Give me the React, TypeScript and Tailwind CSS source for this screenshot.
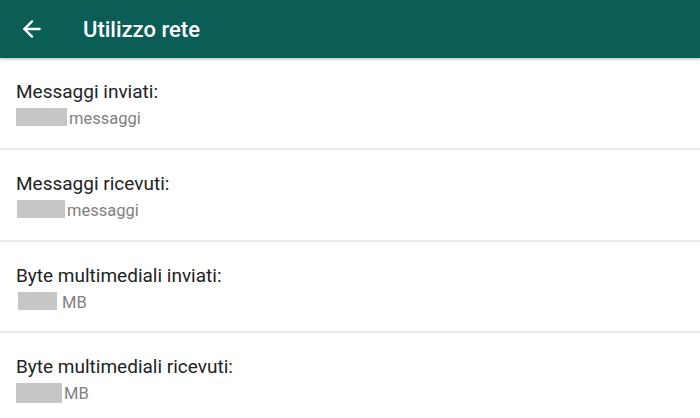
import { ArrowLeft } from "lucide-react";

const rows = [
  { title: "Messaggi inviati:", unit: "messaggi", box: "w-[51px]", gap: "" },
  { title: "Messaggi ricevuti:", unit: "messaggi", box: "w-[48px] ml-px", gap: "" },
  { title: "Byte multimediali inviati:", unit: "MB", box: "w-[39px] ml-[2px]", gap: "ml-[5px]" },
  { title: "Byte multimediali ricevuti:", unit: "MB", box: "w-[46px] h-[20px]", gap: "" },
];

export default function App() {
  return (
    <div className="h-[418px] w-[700px] overflow-hidden bg-white font-['Roboto',sans-serif]">
      <header className="relative z-10 flex h-[58px] items-center bg-[#0a5e55] shadow-[0_1px_3px_rgba(0,0,0,0.3)]">
        <div className="flex w-[83px] pl-[19px]">
          <ArrowLeft className="size-[26px] text-white" strokeWidth={2.2} />
        </div>
        <h1 className="text-[22px] font-medium text-white">Utilizzo rete</h1>
      </header>
      <main>
        {rows.map((row, i) => (
          <div
            key={row.title}
            className={`border-b-2 border-[#ebebeb] pl-4 pt-[22px] ${i === 2 ? "h-[91px]" : "h-[92px]"}`}
          >
            <div className="text-[19px] leading-6 text-[#222222]">{row.title}</div>
            <div className="mt-[4px] flex items-start text-[16.5px] leading-[22px] text-[#808080]">
              <span className={`inline-block h-[18px] bg-[#c6c6c6] ${row.box}`} />
              <span className={`ml-[2px] ${row.gap}`}>{row.unit}</span>
            </div>
          </div>
        ))}
      </main>
    </div>
  );
}
